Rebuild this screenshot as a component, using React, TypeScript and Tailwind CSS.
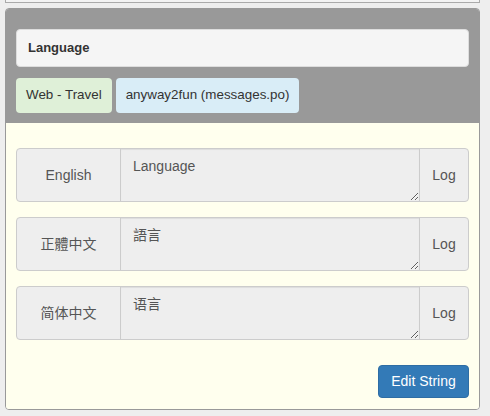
import React from "react";

const font = {
  fontFamily:
    '"Liberation Sans", Arial, "Noto Sans CJK TC", "Noto Sans CJK SC", sans-serif',
};

function Row({ label, value }: { label: string; value: string }) {
  return (
    <div className="flex h-[54px] rounded-[4px] border border-[#cccccc] bg-[#eeeeee] overflow-hidden">
      <div className="w-[104px] shrink-0 flex items-center justify-center text-[14px] text-[#555555] border-r border-[#cccccc]">
        {label}
      </div>
      <textarea
        readOnly
        value={value}
        className="flex-1 min-w-0 h-full bg-[#eeeeee] px-[12px] pt-[7px] text-[14px] text-[#555555] outline-none shadow-[inset_0_1px_1px_rgba(0,0,0,0.075)]"
        style={font}
      />
      <div className="w-[49px] shrink-0 flex items-center justify-center text-[14px] text-[#555555] border-l border-[#cccccc]">
        Log
      </div>
    </div>
  );
}

export default function App() {
  return (
    <div className="min-h-[416px] bg-[#eeeeee] pt-0" style={font}>
      <div className="ml-[5px] w-[475px] h-[3px] border-x border-b border-[#aaaaaa] bg-[#f3f3f3]" />
      <div className="ml-[5px] mt-[5px] w-[475px] rounded-[4px] border border-[#999999] overflow-hidden">
        <div className="bg-[#999999] px-[10px] pt-[20px] pb-[9px]">
          <div className="h-[38px] rounded-[4px] border border-[#dddddd] bg-[#f5f5f5] flex items-center px-[11px] text-[13px] font-bold text-[#333333]">
            Language
          </div>
          <div className="mt-[11px] flex gap-[4px]">
            <div className="h-[35px] px-[10px] rounded-[4px] bg-[#dff0d8] flex items-center text-[13.4px] text-[#333333]">
              Web - Travel
            </div>
            <div className="h-[35px] px-[10px] rounded-[4px] bg-[#d9edf7] flex items-center text-[13.4px] text-[#333333]">
              anyway2fun (messages.po)
            </div>
          </div>
        </div>
        <div className="bg-[#ffffee] border-t border-[#999999] px-[10px] pt-[25px] pb-[11px]">
          <div className="flex flex-col gap-[15px]">
            <Row label="English" value="Language" />
            <Row label="正體中文" value="語言" />
            <Row label="简体中文" value="语言" />
          </div>
          <div className="mt-[25px] flex justify-end">
            <button className="h-[33px] w-[91px] rounded-[4px] bg-[#337ab7] border border-[#2e6da4] text-white text-[14px]">
              Edit String
            </button>
          </div>
        </div>
      </div>
    </div>
  );
}
